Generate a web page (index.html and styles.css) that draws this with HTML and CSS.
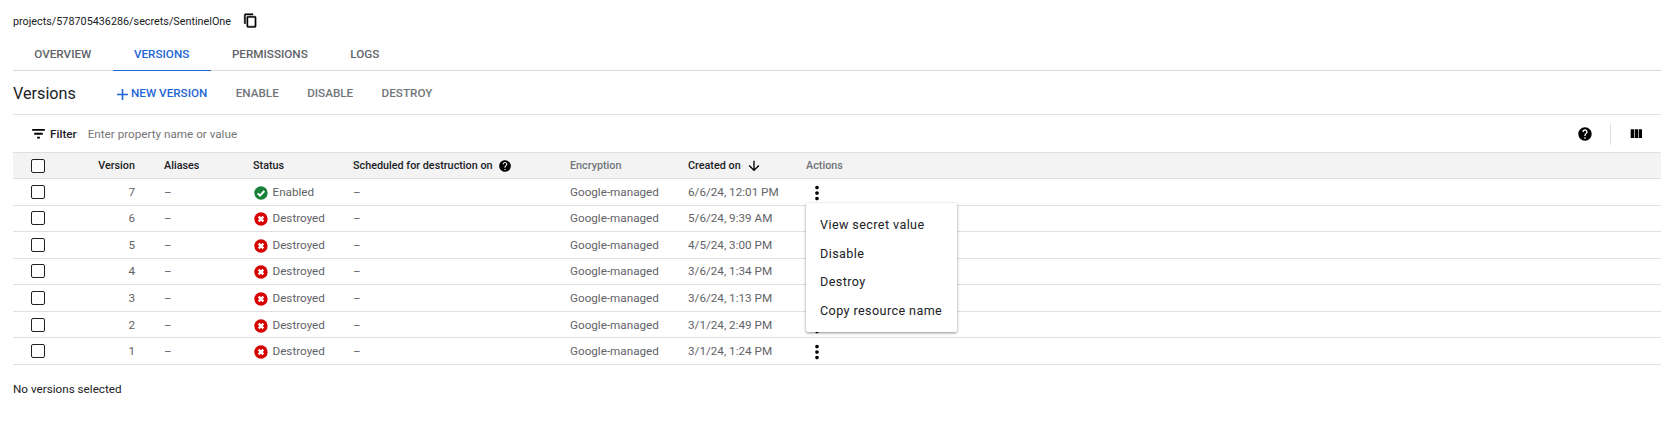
FILE: index.html
```html
<!DOCTYPE html>
<html lang="en">
<head>
    <meta charset="UTF-8">
    <title>Secret versions</title>
    <link rel="stylesheet" href="styles.css">
</head>
<body>
    <svg class="sprites" width="0" height="0">
        <symbol id="i-copy" viewBox="0 0 24 24"><path d="M16 1H4c-1.1 0-2 .9-2 2v14h2V3h12V1zm3 4H8c-1.1 0-2 .9-2 2v14c0 1.1.9 2 2 2h11c1.1 0 2-.9 2-2V7c0-1.1-.9-2-2-2zm0 16H8V7h11v14z"/></symbol>
        <symbol id="i-add" viewBox="0 0 24 24"><path d="M19 13h-6v6h-2v-6H5v-2h6V5h2v6h6v2z"/></symbol>
        <symbol id="i-filter" viewBox="0 0 24 24"><path d="M3 5.5h18v2.6H3zM6 11h12v2.6H6zM10 16.5h4v2.6h-4z"/></symbol>
        <symbol id="i-help" viewBox="0 0 24 24"><path d="M12 2C6.48 2 2 6.48 2 12s4.48 10 10 10 10-4.48 10-10S17.52 2 12 2zm1 17h-2v-2h2v2zm2.07-7.75l-.9.92C13.45 12.9 13 13.5 13 15h-2v-.5c0-1.1.45-2.1 1.17-2.83l1.24-1.26c.37-.36.59-.86.59-1.41 0-1.1-.9-2-2-2s-2 .9-2 2H8c0-2.21 1.79-4 4-4s4 1.79 4 4c0 .88-.36 1.68-.93 2.25z"/></symbol>
        <symbol id="i-columns" viewBox="0 0 24 24"><path d="M10 18h5V5h-5v13zm-6 0h5V5H4v13zM16 5v13h5V5h-5z"/></symbol>
        <symbol id="i-down" viewBox="0 0 24 24"><path d="M20 12l-1.41-1.41L13 16.17V4h-2v12.17l-5.58-5.59L4 12l8 8 8-8z"/></symbol>
        <symbol id="i-more" viewBox="0 0 24 24"><path d="M12 8c1.1 0 2-.9 2-2s-.9-2-2-2-2 .9-2 2 .9 2 2 2zm0 2c-1.1 0-2 .9-2 2s.9 2 2 2 2-.9 2-2-.9-2-2-2zm0 6c-1.1 0-2 .9-2 2s.9 2 2 2 2-.9 2-2-.9-2-2-2z"/></symbol>
        <symbol id="i-ok" viewBox="0 0 24 24"><circle cx="12" cy="12" r="10"/><path d="M7 12.5l3.5 3.5L17 9" fill="none" stroke="#fff" stroke-width="3"/></symbol>
        <symbol id="i-bad" viewBox="0 0 24 24"><circle cx="12" cy="12" r="10"/><path d="M8.5 8.5l7 7M15.5 8.5l-7 7" fill="none" stroke="#fff" stroke-width="3.6"/></symbol>
    </svg>

    <div class="resource-path">
        <span>projects/578705436286/secrets/SentinelOne</span>
        <svg class="icon copy-icon"><use href="#i-copy"/></svg>
    </div>

    <div class="tabs">
        <a class="tab">OVERVIEW</a>
        <a class="tab tab-active">VERSIONS</a>
        <a class="tab">PERMISSIONS</a>
        <a class="tab">LOGS</a>
    </div>

    <div class="section-bar">
        <h2 class="section-title">Versions</h2>
        <button class="action action-primary"><svg class="icon add-icon"><use href="#i-add"/></svg>NEW VERSION</button>
        <button class="action">ENABLE</button>
        <button class="action">DISABLE</button>
        <button class="action">DESTROY</button>
    </div>

    <div class="filter-bar">
        <svg class="icon filter-icon"><use href="#i-filter"/></svg>
        <span class="filter-label">Filter</span>
        <span class="filter-hint">Enter property name or value</span>
        <svg class="icon bar-help"><use href="#i-help"/></svg>
        <span class="bar-divider"></span>
        <svg class="icon columns-icon"><use href="#i-columns"/></svg>
    </div>

    <div class="versions">
        <div class="row row-head">
            <span class="box"></span>
            <span class="num">Version</span>
            <span>Aliases</span>
            <span>Status</span>
            <span class="with-icon">Scheduled for destruction on <svg class="icon head-help"><use href="#i-help"/></svg></span>
            <span class="muted">Encryption</span>
            <span class="with-icon">Created on <svg class="icon sort-icon"><use href="#i-down"/></svg></span>
            <span class="muted">Actions</span>
        </div>
        <div class="row">
            <span class="box"></span><span class="num">7</span><span>–</span>
            <span class="status"><svg class="icon state-icon state-ok"><use href="#i-ok"/></svg>Enabled</span>
            <span>–</span><span>Google-managed</span><span>6/6/24, 12:01 PM</span>
            <svg class="icon more-icon"><use href="#i-more"/></svg>
        </div>
        <div class="row">
            <span class="box"></span><span class="num">6</span><span>–</span>
            <span class="status"><svg class="icon state-icon state-bad"><use href="#i-bad"/></svg>Destroyed</span>
            <span>–</span><span>Google-managed</span><span>5/6/24, 9:39 AM</span>
            <svg class="icon more-icon"><use href="#i-more"/></svg>
        </div>
        <div class="row">
            <span class="box"></span><span class="num">5</span><span>–</span>
            <span class="status"><svg class="icon state-icon state-bad"><use href="#i-bad"/></svg>Destroyed</span>
            <span>–</span><span>Google-managed</span><span>4/5/24, 3:00 PM</span>
            <svg class="icon more-icon"><use href="#i-more"/></svg>
        </div>
        <div class="row">
            <span class="box"></span><span class="num">4</span><span>–</span>
            <span class="status"><svg class="icon state-icon state-bad"><use href="#i-bad"/></svg>Destroyed</span>
            <span>–</span><span>Google-managed</span><span>3/6/24, 1:34 PM</span>
            <svg class="icon more-icon"><use href="#i-more"/></svg>
        </div>
        <div class="row">
            <span class="box"></span><span class="num">3</span><span>–</span>
            <span class="status"><svg class="icon state-icon state-bad"><use href="#i-bad"/></svg>Destroyed</span>
            <span>–</span><span>Google-managed</span><span>3/6/24, 1:13 PM</span>
            <svg class="icon more-icon"><use href="#i-more"/></svg>
        </div>
        <div class="row">
            <span class="box"></span><span class="num">2</span><span>–</span>
            <span class="status"><svg class="icon state-icon state-bad"><use href="#i-bad"/></svg>Destroyed</span>
            <span>–</span><span>Google-managed</span><span>3/1/24, 2:49 PM</span>
            <svg class="icon more-icon"><use href="#i-more"/></svg>
        </div>
        <div class="row">
            <span class="box"></span><span class="num">1</span><span>–</span>
            <span class="status"><svg class="icon state-icon state-bad"><use href="#i-bad"/></svg>Destroyed</span>
            <span>–</span><span>Google-managed</span><span>3/1/24, 1:24 PM</span>
            <svg class="icon more-icon"><use href="#i-more"/></svg>
        </div>

        <div class="menu">
            <div class="menu-item">View secret value</div>
            <div class="menu-item">Disable</div>
            <div class="menu-item">Destroy</div>
            <div class="menu-item">Copy resource name</div>
        </div>
    </div>

    <p class="selection">No versions selected</p>
</body>
</html>
```

FILE: styles.css
```css
* {
    box-sizing: border-box;
}
body {
    margin: 0;
    padding: 0 14px 0 13px;
    font-family: Roboto, "Liberation Sans", sans-serif;
    font-size: 11.7px;
    color: #5f6368;
    background: #fff;
    overflow: hidden;
}
.sprites {
    position: absolute;
}
.icon {
    display: block;
    flex: none;
    fill: currentColor;
}

.resource-path {
    display: flex;
    align-items: center;
    height: 42px;
    font-size: 10.8px;
    color: #202124;
}
.copy-icon {
    width: 15px;
    height: 15px;
    margin: -2px 0 0 12px;
    color: #000;
    stroke: #000;
    stroke-width: 0.7px;
}

.tabs {
    display: flex;
    height: 29px;
    border-bottom: 1px solid #dadce0;
}
.tab {
    height: 29px;
    padding: 4px 21.3px 0;
    font-size: 11.7px;
    font-weight: 500;
    line-height: 17px;
    color: #5f6368;
}
.tab-active {
    color: #1f66d6;
    border-bottom: 1px solid #1f66d6;
}

.section-bar {
    display: flex;
    align-items: center;
    height: 44px;
    border-bottom: 1px solid #e0e0e0;
}
.section-title {
    width: 100px;
    margin: 0;
    padding-top: 1px;
    font-size: 16.2px;
    font-weight: 400;
    color: #202124;
}
.action {
    display: flex;
    align-items: center;
    margin-right: 28.4px;
    padding: 1px 0 0;
    border: none;
    background: none;
    font-family: inherit;
    font-size: 11.7px;
    font-weight: 500;
    color: #70757a;
}
.action-primary {
    color: #1f66d6;
}
.add-icon {
    width: 19px;
    height: 19px;
    margin: 2px -1px 0 0;
}

.filter-bar {
    display: flex;
    align-items: center;
    height: 37px;
    padding-left: 17px;
}
.filter-icon {
    width: 17px;
    height: 17px;
    color: #000;
}
.filter-label {
    margin-left: 3px;
    font-weight: 500;
    color: #202124;
}
.filter-hint {
    flex: 1;
    margin-left: 11px;
    color: #757575;
}
.bar-help {
    width: 16px;
    height: 16px;
    color: #000;
}
.bar-divider {
    width: 1px;
    height: 22px;
    margin: 0 17px 0 17px;
    background: #e0e0e0;
}
.columns-icon {
    width: 16px;
    height: 16px;
    margin-right: 17px;
    color: #000;
}

.versions {
    position: relative;
}
.row {
    display: grid;
    grid-template-columns: 19px 114px 89px 100px 217px 118px 118px 1fr;
    align-items: center;
    height: 26.57px;
    padding-left: 18px;
    border-bottom: 1px solid #e0e0e0;
}
.row-head {
    height: 27px;
    border-top: 1px solid #e0e0e0;
    background: #f3f3f3;
    font-size: 10.8px;
    font-weight: 500;
    color: #202124;
}
.row-head .muted {
    color: #70757a;
}
.box {
    width: 14px;
    height: 14px;
    border: 1.3px solid #202124;
    border-radius: 2px;
    background: #fff;
}
.num {
    padding-right: 29px;
    text-align: right;
}
.with-icon {
    display: flex;
    align-items: center;
    white-space: pre;
}
.head-help {
    width: 14px;
    height: 14px;
    margin-left: 3px;
    color: #000;
}
.sort-icon {
    width: 16px;
    height: 16px;
    margin-left: 3px;
    color: #000;
}
.status {
    display: flex;
    align-items: center;
}
.state-icon {
    width: 16px;
    height: 16px;
    margin: 2px 3.5px 0 0;
}
.state-ok {
    color: #188038;
}
.state-bad {
    color: #d50000;
}
.more-icon {
    width: 22px;
    height: 22px;
    margin-top: 2px;
    color: #000;
}

.menu {
    position: absolute;
    top: 51px;
    left: 793px;
    width: 151px;
    height: 129px;
    padding-top: 8px;
    background: #fff;
    border-radius: 2px;
    box-shadow: 0 1px 3px rgba(0, 0, 0, 0.45);
}
.menu-item {
    height: 28.6px;
    padding-left: 14px;
    font-size: 12.6px;
    line-height: 28.6px;
    letter-spacing: 0.4px;
    color: #202124;
}

.selection {
    margin: 17px 0 0;
    line-height: 15px;
    color: #202124;
}
```
